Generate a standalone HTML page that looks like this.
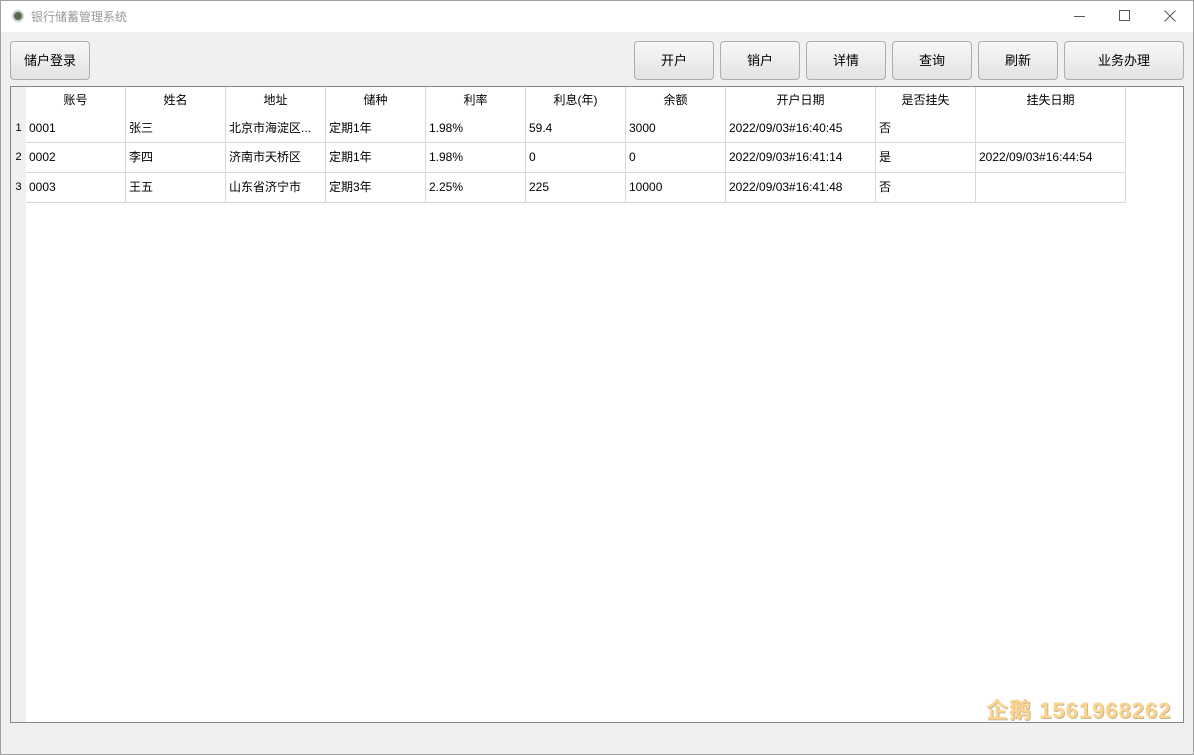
<!DOCTYPE html><html><head><meta charset="utf-8"><style>
*{margin:0;padding:0;box-sizing:border-box}
body{width:1194px;height:755px;background:#f0f0f0;font-family:"Liberation Sans","Microsoft YaHei","Noto Sans CJK SC",sans-serif;font-size:12px;color:#000;position:relative;overflow:hidden;border:1px solid #a0a0a0}
.title{position:absolute;left:0;top:0;width:1192px;height:31px;background:#fff}
.title .t{position:absolute;left:30px;top:7px;color:#999;font-size:12px}
.ico{position:absolute;left:11px;top:9px;width:12px;height:12px;border-radius:50%;background:#5a6a50;border:2px solid #c8d0c8}
.btn{position:absolute;top:40px;height:39px;border:1px solid #adadad;border-radius:4px;background:linear-gradient(#f8f8f8,#e2e2e2);text-align:center;line-height:37px;font-size:13px}
.frame{position:absolute;left:9px;top:85px;width:1174px;height:637px;border:1px solid #828790;background:#fff}
.vh{position:absolute;left:0;top:0;width:15px;height:635px;background:#f0f0f0}
.c{position:absolute;border-right:1px solid #d8d8d8;border-bottom:1px solid #d8d8d8;padding-left:3px;line-height:28px;white-space:nowrap;overflow:hidden}
.h{position:absolute;text-align:center;top:0;height:27px;line-height:27px;border-right:1px solid #d8d8d8;background:#fff;font-size:12px}
.rn{position:absolute;left:0;width:15px;text-align:center;line-height:28px;font-size:11px}
.wm{position:absolute;left:985px;top:692px;color:#fdd48c;font-size:22px;font-weight:bold;letter-spacing:1px;text-shadow:1px 1px 0 #c8b89a}
</style></head><body>
<div class="title"><div class="ico"></div><div class="t">银行储蓄管理系统</div>
<div style="position:absolute;left:1073px;top:15px;width:11px;height:1px;background:#555"></div>
<div style="position:absolute;left:1118px;top:9px;width:11px;height:11px;border:1px solid #555"></div>
<svg style="position:absolute;left:1163px;top:9px" width="12" height="12"><path d="M0.5 0.5L11.5 11.5M11.5 0.5L0.5 11.5" stroke="#555" stroke-width="1"/></svg>
</div>
<div class="btn" style="left:9px;width:80px">储户登录</div>
<div class="btn" style="left:633px;width:80px">开户</div>
<div class="btn" style="left:719px;width:80px">销户</div>
<div class="btn" style="left:805px;width:80px">详情</div>
<div class="btn" style="left:891px;width:80px">查询</div>
<div class="btn" style="left:977px;width:80px">刷新</div>
<div class="btn" style="left:1063px;width:120px">业务办理</div>
<div class="frame" id="f"><div class="vh"></div></div>
<div class="wm">企鹅 1561968262</div>
<script>
var cols=[[15,100,"账号"],[115,100,"姓名"],[215,100,"地址"],[315,100,"储种"],[415,100,"利率"],[515,100,"利息(年)"],[615,100,"余额"],[715,150,"开户日期"],[865,100,"是否挂失"],[965,150,"挂失日期"]];
var rows=[["0001","张三","北京市海淀区...","定期1年","1.98%","59.4","3000","2022/09/03#16:40:45","否",""],
["0002","李四","济南市天桥区","定期1年","1.98%","0","0","2022/09/03#16:41:14","是","2022/09/03#16:44:54"],
["0003","王五","山东省济宁市","定期3年","2.25%","225","10000","2022/09/03#16:41:48","否",""]];
var f=document.getElementById('f'),h='';
cols.forEach(function(c){h+='<div class="h" style="left:'+c[0]+'px;width:'+c[1]+'px">'+c[2]+'</div>';});
var tops=[27,56,86];
rows.forEach(function(r,i){h+='<div class="rn" style="top:'+tops[i]+'px">'+(i+1)+'</div>';
r.forEach(function(v,j){h+='<div class="c" style="left:'+cols[j][0]+'px;top:'+tops[i]+'px;width:'+cols[j][1]+'px;height:'+(i==0?29:30)+'px">'+v+'</div>';});});
f.innerHTML+=h;
</script>
</body></html>
